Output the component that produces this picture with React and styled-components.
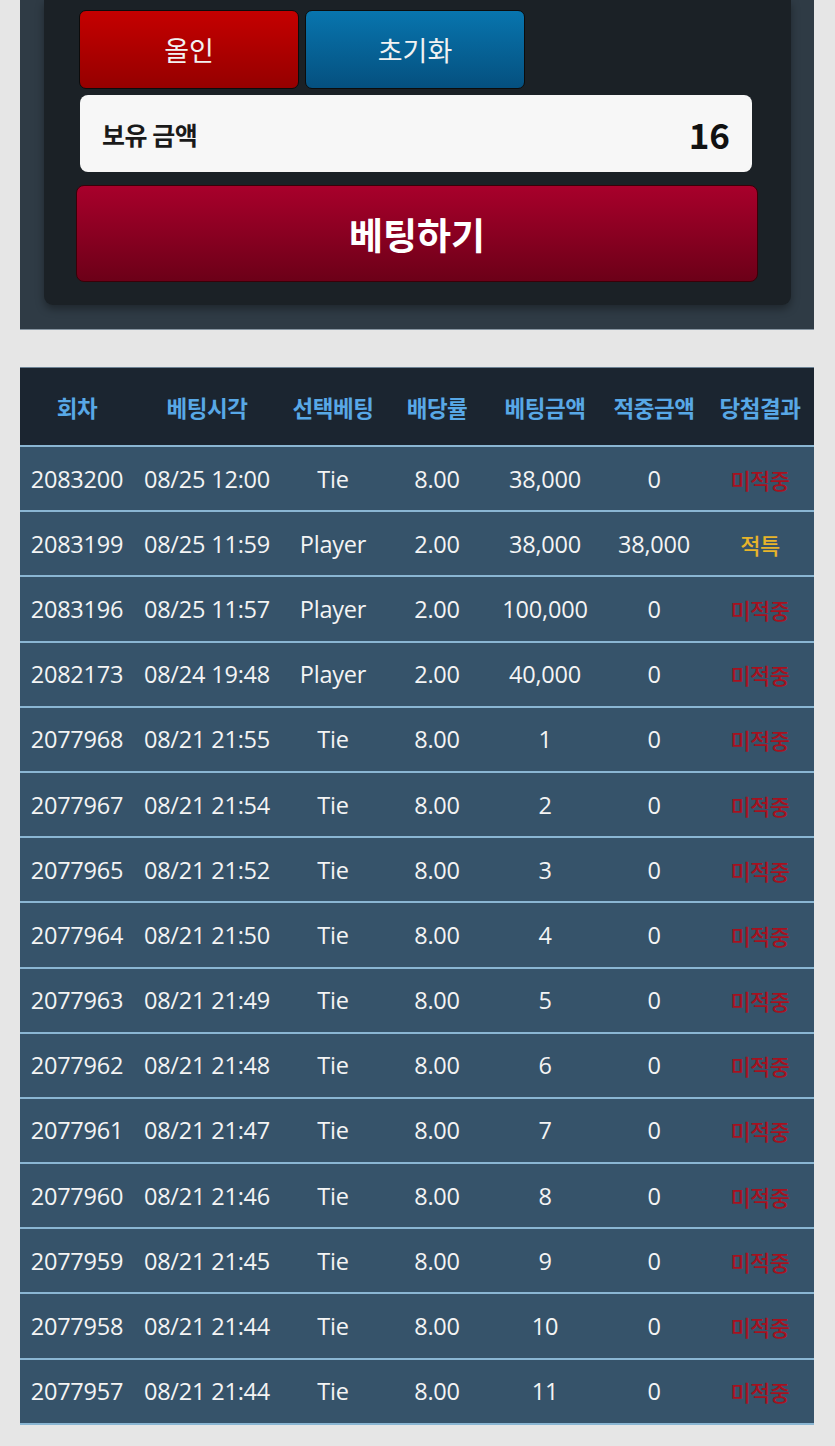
import React from "react";
import styled, { createGlobalStyle } from "styled-components";

const GlobalStyle = createGlobalStyle`
  html, body {
    margin: 0;
    padding: 0;
    background: #e6e6e6;
    font-family: "Open Sans", "Noto Sans CJK KR", sans-serif;
  }
`;

const Page = styled.div`
  padding: 0 21px 21px 20px;
`;

const TopPanel = styled.div`
  background: #2f3b45;
  border-bottom: 1px solid #8795a1;
  padding: 0 23px 24px 24px;
`;

const Inner = styled.div`
  background: #1b2126;
  border-radius: 0 0 9px 9px;
  box-shadow: 0 4px 8px rgba(0, 0, 0, 0.35);
  padding: 10px 33px 23px 32px;
  display: flex;
  flex-direction: column;
`;

const ButtonRow = styled.div`
  display: flex;
  gap: 6px;
  margin-left: 3px;
`;

const SmallButton = styled.button`
  width: 220px;
  height: 79px;
  border-radius: 7px;
  border: 1px solid #0c0c0c;
  color: #f2f2f2;
  font-family: "Noto Sans CJK KR", sans-serif;
  font-size: 27px;
  font-weight: 400;
  background: ${p =>
    p.$tone === "blue"
      ? "linear-gradient(to bottom, #0875ae, #05507f)"
      : "linear-gradient(to bottom, #c50000, #950000)"};
`;

const Balance = styled.div`
  margin: 6px 6px 0 4px;
  height: 77px;
  background: #f7f7f7;
  border-radius: 8px;
  display: flex;
  align-items: center;
  justify-content: space-between;
  padding: 0 22px 0 22px;
  box-sizing: border-box;
`;

const BalanceLabel = styled.span`
  font-family: "Noto Sans CJK KR", sans-serif;
  font-size: 25px;
  font-weight: 700;
  color: #1a1a1a;
  letter-spacing: -0.5px;
`;

const BalanceValue = styled.span`
  font-family: "Noto Sans CJK KR", sans-serif;
  font-size: 35px;
  font-weight: 700;
  color: #111;
`;

const BetButton = styled.button`
  margin-top: 13px;
  height: 97px;
  width: 100%;
  border-radius: 8px;
  border: 1px solid #3a0008;
  background: linear-gradient(to bottom, #a8002b, #6c0018);
  color: #fff;
  font-family: "Noto Sans CJK KR", sans-serif;
  font-size: 37px;
  font-weight: 700;
`;

const Table = styled.table`
  margin-top: 37px;
  width: 100%;
  border-collapse: collapse;
  table-layout: fixed;
  border-top: 1px solid #6c8294;
`;

const HeadCell = styled.th`
  background: #1b2530;
  height: 77px;
  color: #58a8e6;
  font-family: "Noto Sans CJK KR", sans-serif;
  font-size: 22.5px;
  font-weight: 700;
  text-align: center;
  padding: 0;
  letter-spacing: -0.5px;
  border-bottom: 2px solid #8ab6d3;
`;

const Row = styled.tr`
  background: #36536a;
  border-bottom: 2px solid #8ab6d3;
`;

const Cell = styled.td`
  height: 63.2px;
  padding: 0;
  text-align: center;
  color: #f4f4f4;
  font-size: 23.5px;
  white-space: nowrap;
  letter-spacing: -0.2px;
`;

const Result = styled(Cell)`
  font-family: "Noto Sans CJK KR", sans-serif;
  font-size: 22px;
  font-weight: 500;
  letter-spacing: -0.5px;
  color: ${p => (p.$win ? "#e7b42a" : "#a5111f")};
`;

const widths = [114, 146, 106, 102, 114, 104, 108];
const headers = ["회차", "베팅시각", "선택베팅", "배당률", "베팅금액", "적중금액", "당첨결과"];

const rows = [
  ["2083200", "08/25 12:00", "Tie", "8.00", "38,000", "0", "미적중"],
  ["2083199", "08/25 11:59", "Player", "2.00", "38,000", "38,000", "적특"],
  ["2083196", "08/25 11:57", "Player", "2.00", "100,000", "0", "미적중"],
  ["2082173", "08/24 19:48", "Player", "2.00", "40,000", "0", "미적중"],
  ["2077968", "08/21 21:55", "Tie", "8.00", "1", "0", "미적중"],
  ["2077967", "08/21 21:54", "Tie", "8.00", "2", "0", "미적중"],
  ["2077965", "08/21 21:52", "Tie", "8.00", "3", "0", "미적중"],
  ["2077964", "08/21 21:50", "Tie", "8.00", "4", "0", "미적중"],
  ["2077963", "08/21 21:49", "Tie", "8.00", "5", "0", "미적중"],
  ["2077962", "08/21 21:48", "Tie", "8.00", "6", "0", "미적중"],
  ["2077961", "08/21 21:47", "Tie", "8.00", "7", "0", "미적중"],
  ["2077960", "08/21 21:46", "Tie", "8.00", "8", "0", "미적중"],
  ["2077959", "08/21 21:45", "Tie", "8.00", "9", "0", "미적중"],
  ["2077958", "08/21 21:44", "Tie", "8.00", "10", "0", "미적중"],
  ["2077957", "08/21 21:44", "Tie", "8.00", "11", "0", "미적중"],
];

export default function App() {
  return (
    <>
      <GlobalStyle />
      <Page>
        <TopPanel>
          <Inner>
            <ButtonRow>
              <SmallButton>올인</SmallButton>
              <SmallButton $tone="blue">초기화</SmallButton>
            </ButtonRow>
            <Balance>
              <BalanceLabel>보유 금액</BalanceLabel>
              <BalanceValue>16</BalanceValue>
            </Balance>
            <BetButton>베팅하기</BetButton>
          </Inner>
        </TopPanel>

        <Table>
          <colgroup>
            {widths.map((w, i) => (
              <col key={i} style={{ width: w }} />
            ))}
          </colgroup>
          <thead>
            <tr>
              {headers.map(h => (
                <HeadCell key={h}>{h}</HeadCell>
              ))}
            </tr>
          </thead>
          <tbody>
            {rows.map(r => (
              <Row key={r[0]}>
                {r.slice(0, 6).map((v, i) => (
                  <Cell key={i}>{v}</Cell>
                ))}
                <Result $win={r[6] === "적특"}>{r[6]}</Result>
              </Row>
            ))}
          </tbody>
        </Table>
      </Page>
    </>
  );
}
